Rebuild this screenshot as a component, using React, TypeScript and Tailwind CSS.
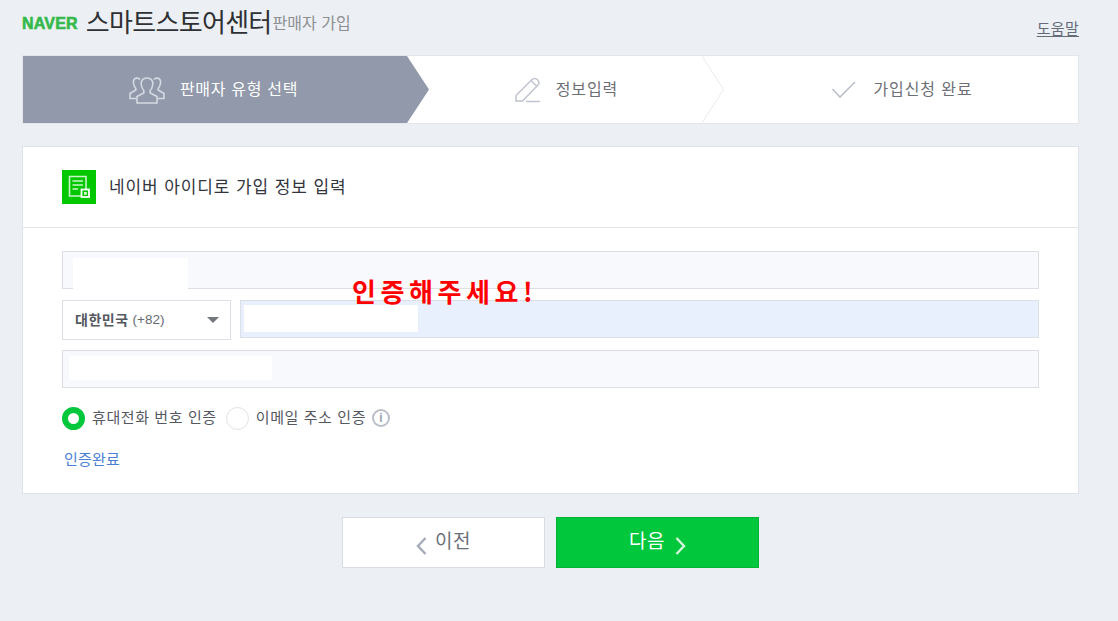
import React from 'react';

const KR = 'font-["Liberation_Sans","Noto_Sans_CJK_KR",sans-serif]';

const GroupIcon = () => (
  <svg width="36" height="30" viewBox="0 0 36 30" fill="none" stroke="#d5d9e2" strokeWidth="1.6">
    <path d="M11 4.5C9.5 2.5 5.5 2.5 4.6 5.5C4 8 5 11 6.8 13.5V15L1 18.5V23.5H7.5" />
    <path d="M25 4.5C26.5 2.5 30.5 2.5 31.4 5.5C32 8 31 11 29.2 13.5V15L35 18.5V23.5H28.5" />
    <path d="M18 3C13.5 3 11.8 6 12.2 9.5C12.5 12 13.5 14 14.8 15.5V18L8 21.5V28H28V21.5L21.2 18V15.5C22.5 14 23.5 12 23.8 9.5C24.2 6 22.5 3 18 3Z" />
  </svg>
);

const PencilIcon = () => (
  <svg width="26" height="26" viewBox="0 0 26 26" fill="none" stroke="#c0c4d0" strokeWidth="1.5">
    <path d="M1 18.5L16.5 3C18 1.5 20.5 1 22.5 2.8C24.5 4.8 24 7 22.5 8.5L7.5 24H1V18.5Z" />
    <path d="M16 3.5L22 9.5" />
    <path d="M11 24.5H25" />
  </svg>
);

const CheckIcon = () => (
  <svg width="26" height="20" viewBox="0 0 26 20" fill="none" stroke="#bcc0cc" strokeWidth="1.6">
    <path d="M1.5 9L9 17L24 2" />
  </svg>
);

const DocIcon = () => (
  <div className="w-[34px] h-[34px] bg-[#03c800] flex items-center justify-center">
    <svg width="22" height="24" viewBox="0 0 22 24" fill="none" stroke="#c9f5c6" strokeWidth="1.6">
      <path d="M13 21H1.5V1.5H18V14" />
      <path d="M4.5 6H15M4.5 10H15M4.5 14H10" />
      <rect x="13.5" y="14.5" width="7.5" height="7.5" fill="#03c800" stroke="#ffffff" strokeWidth="1.8" />
      <rect x="16" y="17" width="2.8" height="2.8" fill="#d9f8d6" stroke="none" />
    </svg>
  </div>
);

export default function App() {
  return (
    <div className={`relative w-[1118px] h-[621px] overflow-hidden bg-[#ecf0f5] pl-[22px] pr-[39px] ${KR}`}>
      <header className="h-[55px] flex items-start">
        <span className='mt-[15px] text-[16px] leading-[18px] font-black text-[#35b94a] tracking-[0.2px] font-["Liberation_Sans",sans-serif] [-webkit-text-stroke:0.6px_#35b94a]'>
          NAVER
        </span>
        <span className="ml-[8px] mt-[5px] text-[26px] leading-[36px] text-[#2f3033] tracking-[-0.7px]">스마트스토어센터</span>
        <span className="ml-[1px] mt-[12px] text-[16px] leading-[24px] text-[#8d8e92]">판매자 가입</span>
        <a className="ml-auto mt-[19px] text-[15px] leading-[20px] tracking-[0.3px] text-[#666b78] underline underline-offset-2">도움말</a>
      </header>

      <div className="relative h-[69px] flex bg-white border border-[#e3e6eb] box-border">
        <div className="relative w-[384px] flex items-center justify-center gap-[15px] pr-[3px] bg-[#9199ab] text-white">
          <GroupIcon />
          <span className="text-[16px] tracking-[0.7px]">판매자 유형 선택</span>
          <svg className="absolute top-0 left-full" width="22" height="67" viewBox="0 0 22 67">
            <polygon points="0,0 22,33.5 0,67" fill="#9199ab" />
          </svg>
        </div>
        <div className="relative w-[295px] flex items-center justify-center gap-[15px] pl-[24px] text-[#6d6f75]">
          <PencilIcon />
          <span className="text-[16px] tracking-[0.9px]">정보입력</span>
          <svg className="absolute top-0 left-full" width="22" height="67" viewBox="0 0 22 67" fill="none" stroke="#e8eaee">
            <path d="M0 0L21.5 33.5L0 67" />
          </svg>
        </div>
        <div className="flex-1 flex items-center justify-center gap-[16px] pl-[24px] text-[#6d6f75]">
          <CheckIcon />
          <span className="text-[16px] tracking-[0.9px]">가입신청 완료</span>
        </div>
      </div>

      <section className="mt-[22px] h-[348px] bg-white border border-[#dfe2e8]">
        <div className="h-[81px] flex items-center gap-[13px] pl-[39px] border-b border-[#e3e5ea]">
          <DocIcon />
          <span className="mt-[1px] text-[17px] text-[#33363d] tracking-[0.9px]">네이버 아이디로 가입 정보 입력</span>
        </div>

        <div className="pt-[23px] px-[39px]">
          <div className="h-[38px] bg-[#f8f9fd] border border-[#dcdfe6] pl-[10px] pt-[6px]">
            <div className="w-[115px] h-[31px] bg-white" />
          </div>

          <div className="mt-[11px] flex gap-[9px] items-start">
            <div className="w-[169px] h-[40px] bg-white border border-[#dcdfe6] flex items-center pl-[12px] pr-[11px]">
              <span className="text-[14px] font-bold text-[#55585f] tracking-[0.5px]">대한민국</span>
              <span className="ml-[4px] text-[13.5px] text-[#666a72]">(+82)</span>
              <span className="ml-auto w-0 h-0 border-x-[6px] border-x-transparent border-t-[6px] border-t-[#75777e]" />
            </div>
            <div className="flex-1 h-[38px] bg-[#e8f0fe] border border-[#dcdfe6] pl-[3px] pt-[4px]">
              <div className="w-[174px] h-[27px] bg-white" />
            </div>
          </div>

          <div className="mt-[10px] h-[38px] bg-[#f8f9fd] border border-[#dcdfe6] pl-[6px] pt-[5px]">
            <div className="w-[203px] h-[24px] bg-white" />
          </div>

          <div className="mt-[18px] h-[24px] flex items-center text-[15px] tracking-[0.6px] text-[#55585f]">
            <span className="w-[23px] h-[23px] rounded-full border-[6px] border-[#00c73c] bg-white" />
            <span className="ml-[7px]">휴대전화 번호 인증</span>
            <span className="ml-[9px] w-[23px] h-[23px] rounded-full border border-[#e0e2e6] bg-white" />
            <span className="ml-[7px]">이메일 주소 인증</span>
            <span className='ml-[6px] w-[18px] h-[18px] rounded-full border-2 border-[#b9bec9] flex items-center justify-center text-[12px] font-bold text-[#9aa0ad] font-["Liberation_Sans",sans-serif]'>
              i
            </span>
          </div>

          <a className="block mt-[20px] ml-[2px] text-[15px] leading-[20px] tracking-[0.2px] text-[#4a7fd4]">인증완료</a>
        </div>
      </section>

      <div className="mt-[23px] flex justify-center gap-[11px]">
        <button className="w-[203px] h-[51px] bg-white border border-[#d9dce3] flex items-center justify-center gap-[8px] text-[19px] tracking-[0.5px] text-[#6d7078]">
          <svg className="mt-[6px]" width="11" height="18" viewBox="0 0 11 18" fill="none" stroke="#a6abba" strokeWidth="2.4">
            <path d="M9.5 1L2 9L9.5 17" />
          </svg>
          <span className="-mt-[1px]">이전</span>
        </button>
        <button className="w-[203px] h-[51px] bg-[#00c73c] border border-[#00b336] flex items-center justify-center gap-[10px] text-[19px] tracking-[0.5px] text-white">
          <span className="-mt-[1px]">다음</span>
          <svg className="mt-[6px]" width="11" height="18" viewBox="0 0 11 18" fill="none" stroke="#d4f5dc" strokeWidth="2.4">
            <path d="M1.5 1L9 9L1.5 17" />
          </svg>
        </button>
      </div>

      <div className='absolute left-[352px] top-[272px] text-[26px] leading-[38px] font-bold text-[#ff0000] tracking-[4.6px] font-["Noto_Sans_CJK_KR",sans-serif]'>
        인증해주세요!
      </div>
    </div>
  );
}
